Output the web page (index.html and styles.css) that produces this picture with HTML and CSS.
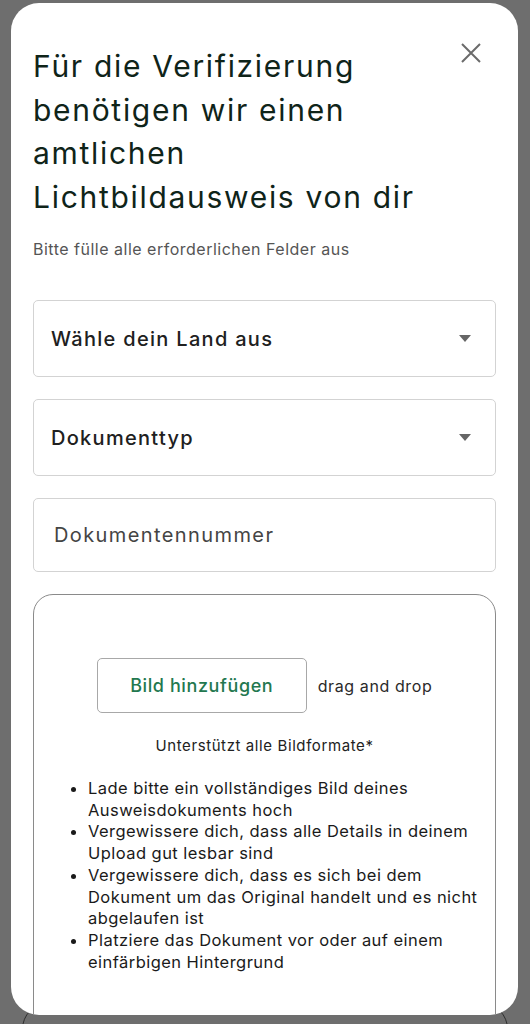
FILE: index.html
```html
<!DOCTYPE html>
<html lang="de">
<head>
    <meta charset="UTF-8">
    <meta name="viewport" content="width=device-width, initial-scale=1.0">
    <title>Verifizierung</title>
    <link rel="stylesheet" href="styles.css">
</head>
<body>
    <!-- Verification dialog -->
    <div class="modal">
        <button class="close-btn" aria-label="Schließen">
            <svg width="20" height="20" viewBox="0 0 20 20">
                <path d="M1 1 L19 19 M19 1 L1 19" stroke="#6b6b6b" stroke-width="2" fill="none"/>
            </svg>
        </button>

        <h1 class="title">Für die Verifizierung benötigen wir einen amtlichen Lichtbildausweis von dir</h1>
        <p class="subtitle">Bitte fülle alle erforderlichen Felder aus</p>

        <div class="field select">
            <span>Wähle dein Land aus</span>
            <span class="arrow"></span>
        </div>
        <div class="field select">
            <span>Dokumenttyp</span>
            <span class="arrow"></span>
        </div>
        <div class="field input">
            <span>Dokumentennummer</span>
        </div>

        <!-- Upload area -->
        <div class="upload">
            <div class="upload-row">
                <button class="add-btn">Bild hinzufügen</button>
                <span class="drop-text">drag and drop</span>
            </div>
            <p class="formats">Unterstützt alle Bildformate*</p>
            <ul class="hints">
                <li>Lade bitte ein vollständiges Bild deines Ausweisdokuments hoch</li>
                <li>Vergewissere dich, dass alle Details in deinem Upload gut lesbar sind</li>
                <li>Vergewissere dich, dass es sich bei dem Dokument um das Original handelt und es nicht abgelaufen ist</li>
                <li>Platziere das Dokument vor oder auf einem einfärbigen Hintergrund</li>
            </ul>
        </div>
    </div>
    <div class="behind"></div>
</body>
</html>
```

FILE: styles.css
```css
/* Page behind the overlay */
body {
    margin: 0;
    padding: 0;
    height: 1024px;
    overflow: hidden;
    background-color: #6e6e6e;
    font-family: Inter, "Noto Sans", sans-serif;
    color: #1c1c1c;
}

/* Dialog card */
.modal {
    position: relative;
    z-index: 1;
    margin: 3px 12px 0 11px;
    height: 1012px;
    padding: 42px 22px 0;
    box-sizing: border-box;
    background-color: #fff;
    border-radius: 28px;
    overflow: hidden;
}

.close-btn {
    position: absolute;
    top: 40px;
    right: 37px;
    padding: 0;
    border: none;
    background: none;
    width: 20px;
    height: 20px;
}

.title {
    margin: 0;
    max-width: 395px;
    font-size: 30px;
    line-height: 43.5px;
    font-weight: 400;
    letter-spacing: 1.7px;
    color: #0f2419;
}

.subtitle {
    margin: 19px 0 0;
    font-size: 16px;
    line-height: 22px;
    letter-spacing: 0.5px;
    color: #555;
}

/* Form fields */
.field {
    display: flex;
    align-items: center;
    justify-content: space-between;
    box-sizing: border-box;
    border: 1px solid #d3d3d3;
    border-radius: 5px;
    font-size: 20px;
    letter-spacing: 1.3px;
    font-weight: 500;
    color: #202020;
}

.select {
    height: 77px;
    padding: 0 24px 0 17px;
    margin-bottom: 22px;
}

.select:first-of-type {
    margin-top: 40px;
}

.input {
    height: 74px;
    padding: 0 20px;
    font-weight: 400;
    letter-spacing: 1.4px;
    color: #444;
}

.arrow {
    width: 0;
    height: 0;
    border-left: 6.5px solid transparent;
    border-right: 6.5px solid transparent;
    border-top: 7px solid #666;
}

/* Upload area */
.upload {
    margin-top: 22px;
    height: 500px;
    padding: 63px 10px 0 16px;
    border: 1px solid #8a8a8a;
    border-radius: 20px;
}

.upload-row {
    display: flex;
    justify-content: center;
    align-items: center;
    gap: 11px;
    margin-right: 6px;
}

.add-btn {
    width: 210px;
    height: 55px;
    background: #fff;
    border: 1px solid #a8a8a8;
    border-radius: 5px;
    font-family: inherit;
    font-size: 18px;
    font-weight: 500;
    letter-spacing: 0.6px;
    color: #23784f;
}

.drop-text {
    font-size: 16px;
    letter-spacing: 0.6px;
    color: #2a2a2a;
}

.formats {
    margin: 23px 6px 0 0;
    text-align: center;
    font-size: 15px;
    line-height: 20px;
    letter-spacing: 0.6px;
    color: #222;
}

.hints {
    margin: 22px 0 0;
    padding-left: 38px;
    font-size: 16.5px;
    font-weight: 400;
    line-height: 21.7px;
    letter-spacing: 0.45px;
    color: #1a1a1a;
}

/* Outline of the page card peeking out below */
.behind {
    margin: -12px 22px 0 22px;
    height: 60px;
    border: 1px solid #2e2e2e;
    border-radius: 26px;
}
```
